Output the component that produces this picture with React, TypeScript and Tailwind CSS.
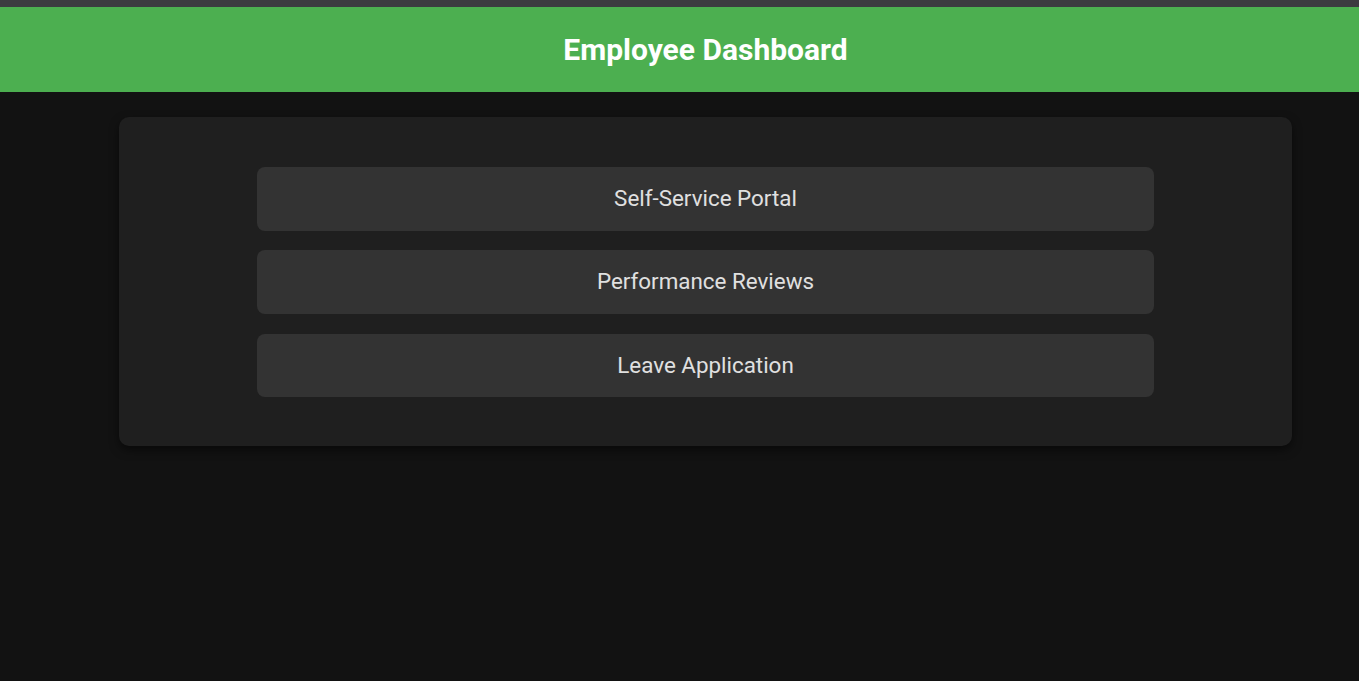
export default function App() {
  const items = ["Self-Service Portal", "Performance Reviews", "Leave Application"];
  return (
    <div className="min-h-[681px] bg-[#121212] overflow-hidden" style={{ fontFamily: "Roboto, 'Liberation Sans', sans-serif" }}>
      <div className="h-[7px] bg-[#3c3b40]" />
      <header className="h-[85px] bg-[#4caf50] flex items-center">
        <div className="w-[1411px] shrink-0 flex justify-center">
          <h1 className="text-[30px] font-bold text-white">Employee Dashboard</h1>
        </div>
      </header>
      <div className="pt-[25px] pl-[119px]">
        <div className="w-[1173px] bg-[#1f1f1f] rounded-[10px] shadow-[0_4px_10px_rgba(0,0,0,0.5)] pt-[50px] pb-[49px] flex flex-col items-center gap-[19.7px]">
          {items.map((t) => (
            <button key={t} className="w-[897px] h-[63.6px] bg-[#333333] rounded-[8px] text-[#e0e0e0] text-[22.4px] flex items-center justify-center">
              {t}
            </button>
          ))}
        </div>
      </div>
    </div>
  );
}
